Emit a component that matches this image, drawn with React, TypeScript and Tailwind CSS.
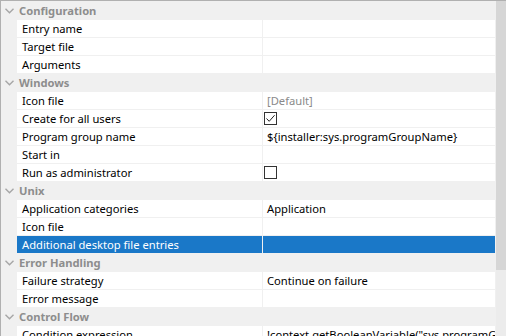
import React from 'react';

type Row =
  | { kind: 'section'; title: string }
  | { kind: 'item'; label: string; value?: string; muted?: boolean; check?: boolean; selected?: boolean };

const ROWS: Row[] = [
  { kind: 'section', title: 'Configuration' },
  { kind: 'item', label: 'Entry name' },
  { kind: 'item', label: 'Target file' },
  { kind: 'item', label: 'Arguments' },
  { kind: 'section', title: 'Windows' },
  { kind: 'item', label: 'Icon file', value: '[Default]', muted: true },
  { kind: 'item', label: 'Create for all users', check: true },
  { kind: 'item', label: 'Program group name', value: '${installer:sys.programGroupName}' },
  { kind: 'item', label: 'Start in' },
  { kind: 'item', label: 'Run as administrator', check: false },
  { kind: 'section', title: 'Unix' },
  { kind: 'item', label: 'Application categories', value: 'Application' },
  { kind: 'item', label: 'Icon file' },
  { kind: 'item', label: 'Additional desktop file entries', selected: true },
  { kind: 'section', title: 'Error Handling' },
  { kind: 'item', label: 'Failure strategy', value: 'Continue on failure' },
  { kind: 'item', label: 'Error message' },
  { kind: 'section', title: 'Control Flow' },
  { kind: 'item', label: 'Condition expression', value: '!context.getBooleanVariable("sys.programGroupDisabled")' },
];

function Chevron() {
  return (
    <svg width="9" height="6" viewBox="0 0 9 6" className="shrink-0">
      <path d="M0.5 0.8 L4.5 4.8 L8.5 0.8" fill="none" stroke="#a6a6a6" strokeWidth="1.4" />
    </svg>
  );
}

function Checkbox({ checked }: { checked: boolean }) {
  return (
    <div className="w-[13px] h-[13px] border border-[#333333] bg-white flex items-center justify-center">
      {checked && (
        <svg width="11" height="11" viewBox="0 0 11 11">
          <path d="M1.5 5.5 L4.2 8.3 L9.6 2.2" fill="none" stroke="#222222" strokeWidth="1" />
        </svg>
      )}
    </div>
  );
}

export default function App() {
  return (
    <div
      className="w-[506px] h-[336px] overflow-hidden bg-[#f0f0f0] border-t border-l border-[#b0b0b0] flex text-[11.2px] leading-none"
      style={{ fontFamily: '"Noto Sans", "Liberation Sans", sans-serif' }}
    >
      <div className="flex-1 flex flex-col gap-px pt-px min-w-0">
        {ROWS.map((row, i) =>
          row.kind === 'section' ? (
            <div key={i} className="h-[17px] shrink-0 flex items-center gap-[5px] pl-[4px] pt-px text-[#8d8d8d] font-bold">
              <Chevron />
              <span>{row.title}</span>
            </div>
          ) : (
            <div key={i} className="h-[17px] shrink-0 flex pl-[16px] pr-px gap-px">
              <div
                className={`w-[245px] shrink-0 flex items-center pl-[5px] pt-px whitespace-nowrap ${
                  row.selected ? 'bg-[#1a78c8] text-white' : 'bg-white text-black'
                }`}
              >
                {row.label}
              </div>
              <div
                className={`flex-1 min-w-0 overflow-hidden flex items-center pl-[4px] whitespace-nowrap ${
                  row.check !== undefined ? '' : 'pt-px'
                } ${row.selected ? 'bg-[#1a78c8] text-white' : 'bg-white'} ${
                  row.muted ? 'text-[#8a8a8a]' : 'text-black'
                }`}
              >
                {row.check !== undefined ? (
                  <div className="-ml-[3px]">
                    <Checkbox checked={row.check} />
                  </div>
                ) : (
                  row.value
                )}
              </div>
            </div>
          )
        )}
      </div>
      <div className="w-[10px] shrink-0 flex flex-col">
        <div className="h-[269px] bg-[#d6d6d6]" />
        <div className="flex-1 bg-[#ececec]" />
      </div>
    </div>
  );
}
